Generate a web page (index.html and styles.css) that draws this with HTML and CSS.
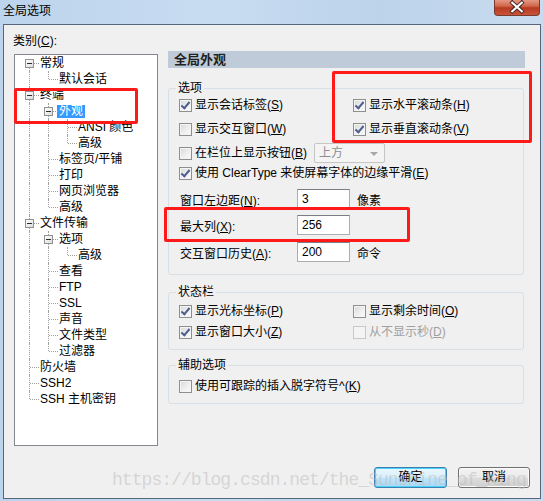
FILE: index.html
```html
<!DOCTYPE html>
<html lang="zh">
<head>
<meta charset="utf-8">
<title>全局选项</title>
<link rel="stylesheet" href="styles.css">
</head>
<body>
<div class="window">
  <div class="titlebar">
    <span class="title">全局选项</span>
    <span class="close">
      <svg width="46" height="17" viewBox="0 0 46 17">
        <path d="M18 3.5 L22 8 L18 12.5 M28 3.5 L24 8 L28 12.5 M18 3.5 L28 12.5 M28 3.5 L18 12.5" stroke="#4a2a24" stroke-width="4" fill="none" stroke-linecap="square"/>
        <path d="M18 3.5 L28 12.5 M28 3.5 L18 12.5" stroke="#ffffff" stroke-width="2.2" fill="none" stroke-linecap="square"/>
      </svg>
    </span>
  </div>
  <div class="client">
    <div class="main">
      <div class="left">
        <div class="cat">类别(<u>C</u>):</div>
        <div class="tree">
          <div class="row"><span class="c f"><i class="box"></i></span><span class="lbl">常规</span></div>
          <div class="row"><span class="c v"></span><span class="c l"></span><span class="lbl">默认会话</span></div>
          <div class="row"><span class="c t"><i class="box"></i></span><span class="lbl">终端</span></div>
          <div class="row"><span class="c v"></span><span class="c t"><i class="box"></i></span><span class="lbl sel">外观</span></div>
          <div class="row"><span class="c v"></span><span class="c v"></span><span class="c t"></span><span class="lbl">ANSI 颜色</span></div>
          <div class="row"><span class="c v"></span><span class="c v"></span><span class="c l"></span><span class="lbl">高级</span></div>
          <div class="row"><span class="c v"></span><span class="c t"></span><span class="lbl">标签页/平铺</span></div>
          <div class="row"><span class="c v"></span><span class="c t"></span><span class="lbl">打印</span></div>
          <div class="row"><span class="c v"></span><span class="c t"></span><span class="lbl">网页浏览器</span></div>
          <div class="row"><span class="c v"></span><span class="c l"></span><span class="lbl">高级</span></div>
          <div class="row"><span class="c t"><i class="box"></i></span><span class="lbl">文件传输</span></div>
          <div class="row"><span class="c v"></span><span class="c t"><i class="box"></i></span><span class="lbl">选项</span></div>
          <div class="row"><span class="c v"></span><span class="c v"></span><span class="c l"></span><span class="lbl">高级</span></div>
          <div class="row"><span class="c v"></span><span class="c t"></span><span class="lbl">查看</span></div>
          <div class="row"><span class="c v"></span><span class="c t"></span><span class="lbl">FTP</span></div>
          <div class="row"><span class="c v"></span><span class="c t"></span><span class="lbl">SSL</span></div>
          <div class="row"><span class="c v"></span><span class="c t"></span><span class="lbl">声音</span></div>
          <div class="row"><span class="c v"></span><span class="c t"></span><span class="lbl">文件类型</span></div>
          <div class="row"><span class="c v"></span><span class="c l"></span><span class="lbl">过滤器</span></div>
          <div class="row"><span class="c t"></span><span class="lbl">防火墙</span></div>
          <div class="row"><span class="c t"></span><span class="lbl">SSH2</span></div>
          <div class="row"><span class="c l"></span><span class="lbl">SSH 主机密钥</span></div>
        </div>
      </div>
      <div class="right">
        <div class="header">全局外观</div>
        <fieldset class="grp opts">
          <legend>选项</legend>
          <div class="grid2 r1">
            <label class="cb"><span class="box13 on"></span>显示会话标签(<u>S</u>)</label>
            <label class="cb"><span class="box13 on"></span>显示水平滚动条(<u>H</u>)</label>
          </div>
          <div class="grid2 r2">
            <label class="cb"><span class="box13"></span>显示交互窗口(<u>W</u>)</label>
            <label class="cb"><span class="box13 on"></span>显示垂直滚动条(<u>V</u>)</label>
          </div>
          <div class="line r3">
            <label class="cb"><span class="box13"></span>在栏位上显示按钮(<u>B</u>)</label>
            <span class="combo">上方<i class="arrow"></i></span>
          </div>
          <div class="line r4">
            <label class="cb"><span class="box13 on"></span>使用 ClearType 来使屏幕字体的边缘平滑(<u>E</u>)</label>
          </div>
          <div class="field r5"><span class="flabel">窗口左边距(<u>N</u>):</span><span class="tb">3</span><span class="unit">像素</span></div>
          <div class="field r6"><span class="flabel">最大列(<u>X</u>):</span><span class="tb">256</span></div>
          <div class="field r7"><span class="flabel">交互窗口历史(<u>A</u>):</span><span class="tb">200</span><span class="unit">命令</span></div>
        </fieldset>
        <fieldset class="grp status">
          <legend>状态栏</legend>
          <div class="grid2 s1">
            <label class="cb"><span class="box13 on"></span>显示光标坐标(<u>P</u>)</label>
            <label class="cb"><span class="box13"></span>显示剩余时间(<u>O</u>)</label>
          </div>
          <div class="grid2 s2">
            <label class="cb"><span class="box13 on"></span>显示窗口大小(<u>Z</u>)</label>
            <label class="cb dis"><span class="box13"></span>从不显示秒(<u>D</u>)</label>
          </div>
        </fieldset>
        <fieldset class="grp aux">
          <legend>辅助选项</legend>
          <div class="line a1">
            <label class="cb"><span class="box13"></span>使用可跟踪的插入脱字符号^(<u>K</u>)</label>
          </div>
        </fieldset>
      </div>
    </div>
    <div class="footer">
      <span class="btn def">确定</span>
      <span class="btn">取消</span>
    </div>
  </div>
  <div class="mark m1"></div>
  <div class="mark m2"></div>
  <div class="mark m3"></div>
  <div class="wm">https://blog.csdn.net/the_Sunshine_of_King</div>
</div>
</body>
</html>
```
FILE: styles.css
```css
html, body {
  margin: 0;
  padding: 0;
}
body {
  width: 543px;
  height: 501px;
  overflow: hidden;
  background: #c4d9ee;
  font-family: "Liberation Sans", "Noto Sans CJK SC", sans-serif;
  font-size: 12px;
  color: #000;
}
.window {
  position: relative;
  width: 543px;
  height: 501px;
  background: linear-gradient(90deg, #bcd4ec 0%, #c8dcf1 40%, #bcd3ea 70%, #c9dcef 100%);
}
.titlebar {
  height: 24px;
  display: flex;
  align-items: flex-start;
  justify-content: space-between;
}
.title {
  padding: 3px 0 0 3px;
  line-height: 16px;
  font-size: 12px;
}
.close {
  width: 46px;
  height: 17px;
  margin: -1px 3px 0 0;
  border: 1px solid #7a3a30;
  border-top: none;
  border-radius: 0 0 4px 4px;
  background: linear-gradient(#e8a08c 0%, #d0664c 45%, #b83a20 55%, #c8543a 100%);
  box-sizing: border-box;
  display: flex;
}
.close svg { display: block; }
.client {
  margin-left: 3px;
  width: 538px;
  height: 475px;
  box-sizing: border-box;
  border: 1px solid #55677c;
  background: #f0f0f0;
  display: flex;
  flex-direction: column;
}
.main {
  display: flex;
  padding-left: 10px;
  gap: 10px;
}
.left {
  width: 144px;
  display: flex;
  flex-direction: column;
}
.cat {
  margin: 8px 0 0 -1px;
  line-height: 16px;
  height: 16px;
}
.tree {
  margin-top: 5px;
  height: 392px;
  box-sizing: border-box;
  border: 1px solid #828790;
  background: #fff;
  padding-left: 5px;
}
.row {
  display: flex;
  height: 16px;
  line-height: 16px;
  white-space: nowrap;
}
.c {
  position: relative;
  flex: none;
  width: 19px;
  height: 16px;
}
.c::before {
  content: "";
  position: absolute;
  left: 9px;
  top: 0;
  bottom: 0;
  border-left: 1px dotted #a0a0a0;
}
.c.f::before { top: 8px; }
.c.l::before { bottom: 8px; }
.c.t::after, .c.l::after, .c.f::after {
  content: "";
  position: absolute;
  left: 10px;
  right: 0;
  top: 8px;
  border-top: 1px dotted #a0a0a0;
}
.box {
  position: absolute;
  left: 5px;
  top: 4px;
  width: 9px;
  height: 9px;
  box-sizing: border-box;
  border: 1px solid #919191;
  background: linear-gradient(135deg, #ffffff, #dcdcdc);
  z-index: 1;
}
.box::after {
  content: "";
  position: absolute;
  left: 1px;
  top: 3px;
  width: 5px;
  height: 1px;
  background: #2c2c2c;
}
.lbl { padding-left: 1px; }
.lbl.sel {
  background: #3399ff;
  color: #fff;
  padding: 0 2px;
  margin-left: -1px;
  height: 13px;
  line-height: 13px;
  margin-top: 2px;
}
.right {
  width: 357px;
  display: flex;
  flex-direction: column;
}
.header {
  margin-top: 26px;
  height: 17px;
  line-height: 17px;
  background: #bfcbd8;
  font-weight: bold;
  font-size: 13px;
  padding-left: 6px;
  color: #222;
}
.grp {
  margin: 0;
  width: 356px;
  box-sizing: border-box;
  border: 1px solid #d5dfe5;
  border-radius: 3px;
  padding: 0 0 0 10px;
}
.grp legend {
  padding: 0 2px;
  margin-left: -3px;
  line-height: 14px;
  font-size: 12px;
}
.opts { margin-top: 13px; padding-bottom: 12px; }
.status { margin-top: 10px; padding-bottom: 7px; }
.aux { margin-top: 8px; padding-bottom: 7px; }
.grid2 {
  display: grid;
  grid-template-columns: 174px 1fr;
  height: 20px;
  align-items: center;
}
.line {
  display: flex;
  align-items: center;
  height: 20px;
}
.r1 { margin-top: 0; }
.r2 { margin-top: 4px; }
.r3 { margin-top: 4px; }
.r4 { margin-top: 0; }
.r5 { margin-top: 6px; }
.r6 { margin-top: 6px; }
.r7 { margin-top: 7px; }
.s1 { margin-top: 2px; }
.s2 { margin-top: 1px; }
.a1 { margin-top: 4px; }
.cb {
  display: flex;
  align-items: center;
  white-space: nowrap;
  line-height: 16px;
}
.box13 {
  width: 13px;
  height: 13px;
  box-sizing: border-box;
  border: 1px solid #8e8f8f;
  background: linear-gradient(135deg, #d8d8d8 0%, #f0f0f0 60%, #fbfbfb 100%);
  box-shadow: inset 0 0 0 1px #f4f4f4;
  margin-right: 3px;
  flex: none;
  position: relative;
}
.box13.on::after {
  content: "";
  position: absolute;
  left: 3px;
  top: 0px;
  width: 3px;
  height: 7px;
  border-right: 2px solid #4b5e8e;
  border-bottom: 2px solid #4b5e8e;
  transform: rotate(40deg);
  transform-origin: center;
}
.cb.dis { color: #a0a0a0; }
.cb.dis .box13 {
  border-color: #c8c8c8;
  background: #f4f4f4;
  box-shadow: none;
}
.combo {
  margin-left: 7px;
  width: 71px;
  height: 20px;
  box-sizing: border-box;
  border: 1px solid #c5c5c5;
  border-radius: 2px;
  background: #f4f4f4;
  color: #8d8d8d;
  padding-left: 4px;
  line-height: 18px;
  position: relative;
}
.arrow {
  position: absolute;
  right: 6px;
  top: 8px;
  width: 0;
  height: 0;
  border-left: 4px solid transparent;
  border-right: 4px solid transparent;
  border-top: 4px solid #a8a8a8;
}
.field {
  display: flex;
  align-items: center;
  height: 20px;
  padding-left: 1px;
}
.flabel {
  width: 117px;
  white-space: nowrap;
}
.tb {
  width: 53px;
  height: 20px;
  box-sizing: border-box;
  border: 1px solid #abadb3;
  border-top-color: #7a7d85;
  background: #fff;
  padding-left: 4px;
  line-height: 18px;
}
.unit { margin-left: 7px; }
.footer {
  margin-top: auto;
  display: flex;
  justify-content: flex-end;
  gap: 11px;
  padding: 0 10px 10px 0;
}
.btn {
  width: 72px;
  height: 21px;
  box-sizing: border-box;
  border: 1px solid #707070;
  border-radius: 3px;
  background: linear-gradient(#f2f2f2 0%, #ebebeb 48%, #dddddd 52%, #cfcfcf 100%);
  text-align: center;
  line-height: 19px;
  box-shadow: inset 0 0 0 1px #fbfbfb;
}
.btn.def {
  width: 73px;
  border-color: #3c7fb1;
  box-shadow: inset 0 0 0 1px #48d1f9;
  background: linear-gradient(#eaf6fd 0%, #d9f0fc 48%, #bee6fd 52%, #a7d9f5 100%);
}
.mark {
  position: absolute;
  border: 3px solid #ff1a1a;
  border-radius: 2px;
  box-sizing: border-box;
}
.m1 { left: 14px; top: 88px; width: 124px; height: 36px; }
.m2 { left: 332px; top: 71px; width: 200px; height: 72px; }
.m3 { left: 164px; top: 207px; width: 246px; height: 35px; }
.wm {
  position: absolute;
  left: 112px;
  top: 470px;
  font-family: "Liberation Mono", monospace;
  font-size: 18px;
  letter-spacing: -0.95px;
  line-height: 20px;
  color: rgba(190, 190, 190, 0.55);
  white-space: nowrap;
}
```
